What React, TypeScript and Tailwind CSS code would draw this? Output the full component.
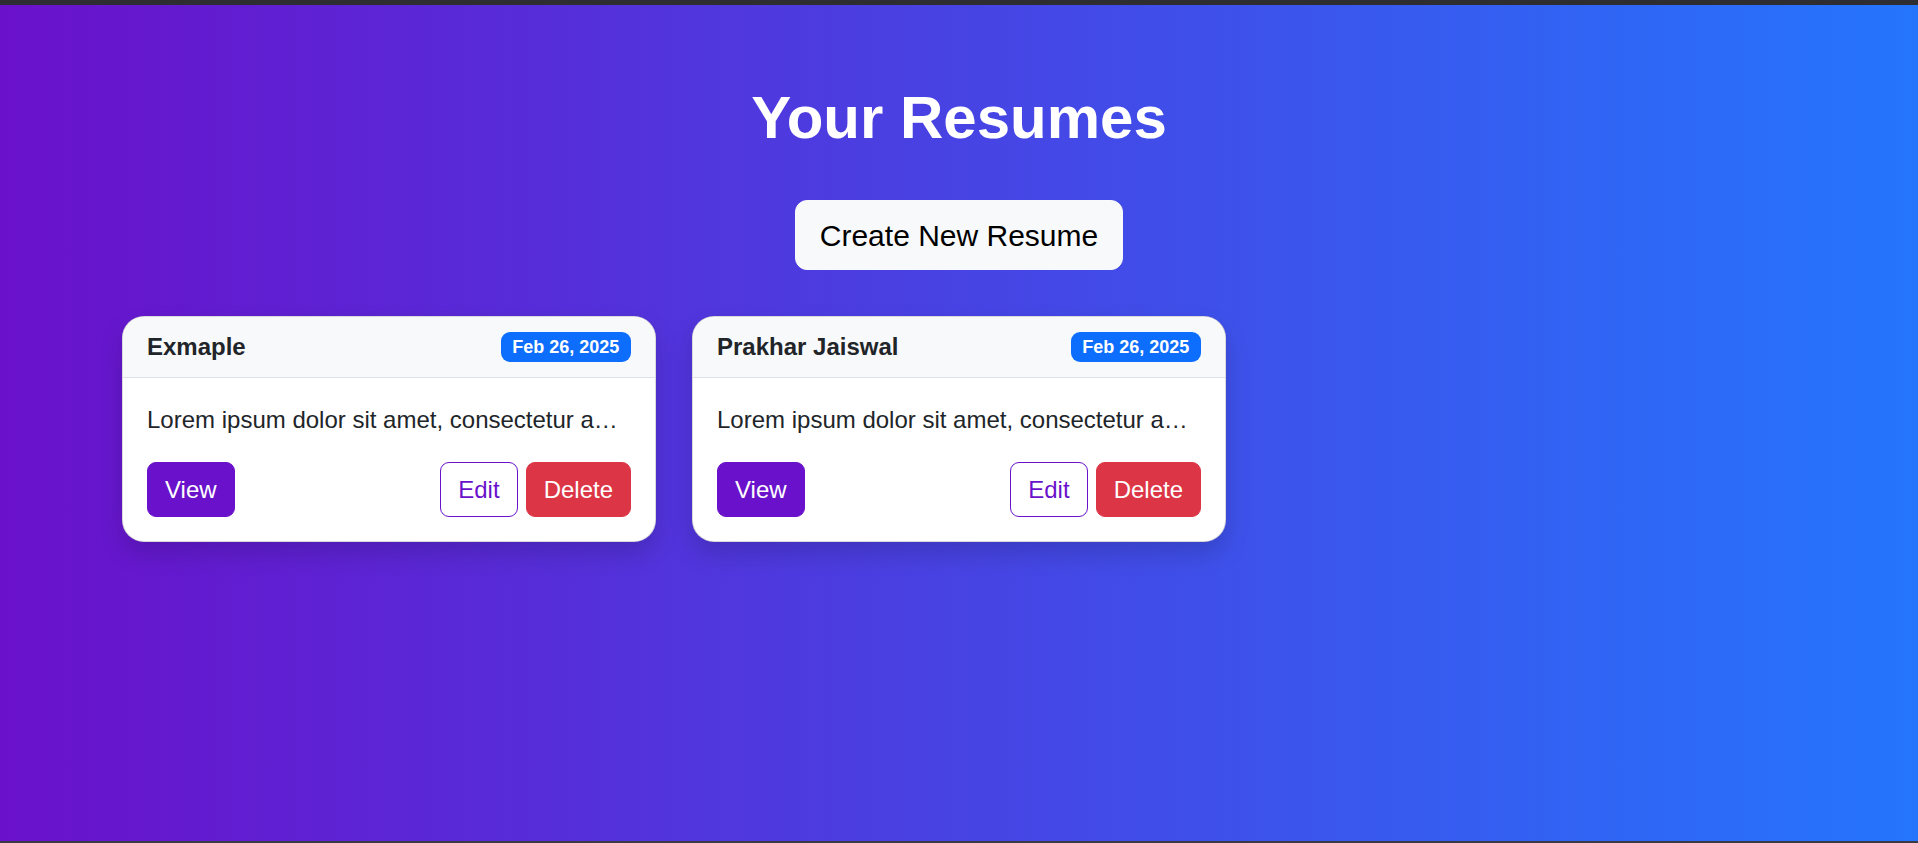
const LOREM =
  'Lorem ipsum dolor sit amet, consectetur adipiscing elit, sed do eiusmod tempor incididunt ut labore.';

type Resume = { id: number; name: string; date: string; summary: string };

const resumes: Resume[] = [
  { id: 1, name: 'Exmaple', date: 'Feb 26, 2025', summary: LOREM },
  { id: 2, name: 'Prakhar Jaiswal', date: 'Feb 26, 2025', summary: LOREM },
];

function ResumeCard({ resume }: { resume: Resume }) {
  return (
    <div className="overflow-hidden rounded-[22px] border-[1.5px] border-black/15 bg-white shadow-[0_12px_24px_rgba(0,0,0,0.15)]">
      <div className="flex items-center justify-between border-b-[1.5px] border-[#dee2e6] bg-[#f8f9fa] px-[24px] py-[12px]">
        <h5 className="text-[24px] font-bold leading-[36px] text-[#212529]">{resume.name}</h5>
        <span className="rounded-[9px] bg-[#0d6efd] px-[11.7px] py-[6.3px] text-[18px] font-bold leading-none text-white">
          {resume.date}
        </span>
      </div>
      <div className="p-[24px]">
        <p className="mb-[24px] truncate text-[24px] leading-[36px] text-[#212529]">{resume.summary}</p>
        <div className="flex items-center justify-between">
          <button
            type="button"
            className="rounded-[9px] border-[1.5px] border-[#6a11cb] bg-[#6a11cb] px-[17px] py-[8.5px] text-[24px] leading-[36px] text-white"
          >
            View
          </button>
          <div className="flex gap-[8px]">
            <button
              type="button"
              className="rounded-[9px] border-[1.5px] border-[#6a11cb] bg-white px-[17px] py-[8.5px] text-[24px] leading-[36px] text-[#6a11cb]"
            >
              Edit
            </button>
            <button
              type="button"
              className="rounded-[9px] border-[1.5px] border-[#dc3545] bg-[#dc3545] px-[17px] py-[8.5px] text-[24px] leading-[36px] text-white"
            >
              Delete
            </button>
          </div>
        </div>
      </div>
    </div>
  );
}

export default function App() {
  return (
    <div
      className="flex min-h-screen flex-col bg-[#2e2d32]"
      style={{ fontFamily: '"Liberation Sans", Arial, sans-serif' }}
    >
      <div className="h-[5px] bg-[#2e2d32]" />
      <main className="flex-1 bg-[linear-gradient(to_right,#6a11cb,#2575fc)]">
        <div className="mx-auto w-[1710px] px-[18px] pt-[77px]">
          <h1 className="text-center text-[60px] font-bold leading-[1.2] text-white">Your Resumes</h1>
          <div className="mt-[46px] flex justify-center">
            <button
              type="button"
              className="rounded-[12px] border-[1.5px] border-[#f8f9fa] bg-[#f8f9fa] px-[24px] py-[11.5px] text-[30px] leading-[45px] text-black"
            >
              Create New Resume
            </button>
          </div>
          <div className="mt-[46px] grid grid-cols-3 gap-[36px]">
            {resumes.map((r) => (
              <ResumeCard key={r.id} resume={r} />
            ))}
          </div>
        </div>
      </main>
      <div className="h-[2px] bg-[#3a3946]" />
    </div>
  );
}
